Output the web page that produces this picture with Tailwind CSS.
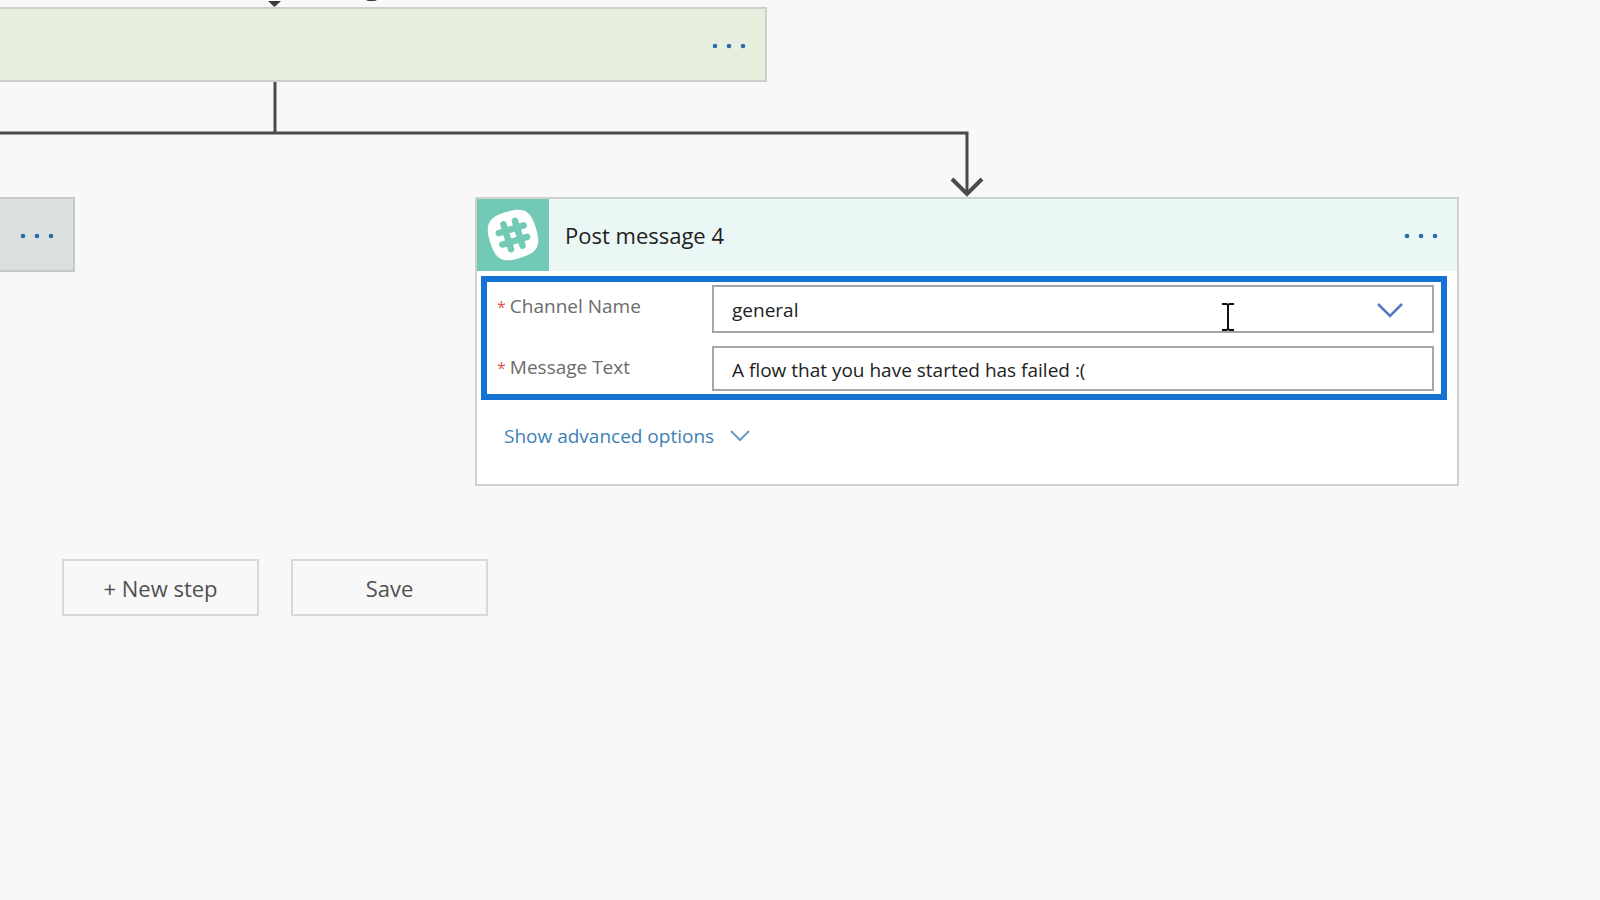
<!DOCTYPE html>
<html lang="en">
<head>
    <meta charset="UTF-8">
    <meta name="viewport" content="width=device-width, initial-scale=1.0">
    <title>Flow designer</title>
    <script src="https://cdn.jsdelivr.net/npm/@tailwindcss/browser@4"></script>
</head>
<body class="min-h-screen overflow-x-hidden bg-[#f8f8f8] font-['Open_Sans','Noto_Sans',sans-serif] text-[#333]">
    <main>
        <!-- Incoming arrow -->
        <svg class="block h-[7px] w-full" fill="#3c3c3c" aria-hidden="true">
            <path d="M268 1h13l-6.5 6z"/>
            <path d="M366 0h11l-2 1h-7z"/>
        </svg>

        <!-- Parent step -->
        <section class="flex h-[75px] w-[767px] items-center justify-end border-2 border-l-0 border-[#cdd0c8] bg-[#e8eedd] pt-[2px] pr-4">
            <button type="button" aria-label="Step menu" class="flex h-10 w-10 items-center justify-center">
                <svg class="h-2 w-9" viewBox="0 0 36 8" fill="#2a6ca8"><circle cx="4" cy="4" r="2.3"/><circle cx="18" cy="4" r="2.3"/><circle cx="32" cy="4" r="2.3"/></svg>
            </button>
        </section>

        <!-- Branch connector -->
        <svg class="block h-[115px] w-full" fill="none" stroke="#4a4a4a" stroke-width="3" aria-hidden="true">
            <path d="M275 0v51M0 51h967v60"/>
            <path d="M952 97l15 15l15-15" stroke-width="4"/>
        </svg>

        <div class="flex items-start">
            <section class="flex h-[75px] w-[75px] shrink-0 items-center justify-end border-2 border-l-0 border-[#c6c9c9] bg-[#dcdfdf] pt-[2px] pr-4">
                <button type="button" aria-label="Step menu" class="flex h-10 w-10 items-center justify-center">
                    <svg class="h-2 w-9" viewBox="0 0 36 8" fill="#2a6ca8"><circle cx="4" cy="4" r="2.3"/><circle cx="18" cy="4" r="2.3"/><circle cx="32" cy="4" r="2.3"/></svg>
                </button>
            </section>

            <!-- Slack action card -->
            <section class="ml-[400px] w-full max-w-[984px] border-2 border-[#cdd1d0] bg-white pb-8">
                <header class="flex h-[72px] items-center bg-[#eaf7f5] pr-4">
                    <svg class="h-[72px] w-[72px] shrink-0" viewBox="0 0 72 72" aria-hidden="true">
                        <rect width="72" height="72" fill="#72c9b5"/>
                        <g transform="rotate(-17 36 36)">
                            <path d="M36 12C54 12 60 17 60 36S54 60 36 60S12 55 12 36S18 12 36 12Z" fill="#fff"/>
                            <path d="M30 23v26M42 23v26M23 30h26M23 42h26" fill="none" stroke="#72c9b5" stroke-width="6.500" stroke-linecap="round"/>
                        </g>
                    </svg>
                    <h2 class="ml-4 flex-1 text-[22px] leading-8 text-[#222]">Post message 4</h2>
                    <button type="button" aria-label="Step menu" class="flex h-10 w-10 items-center justify-center pt-[2px]">
                        <svg class="h-2 w-9" viewBox="0 0 36 8" fill="#2a6ca8"><circle cx="4" cy="4" r="2.3"/><circle cx="18" cy="4" r="2.3"/><circle cx="32" cy="4" r="2.3"/></svg>
                    </button>
                </header>

                <form class="mt-[5px] mr-[10px] ml-1 grid grid-cols-[214px_1fr] gap-x-[1px] gap-y-[13px] border-[6px] border-[#1473d2] py-[3px] pr-[7px] pl-[10px] text-[19px]">
                    <label for="channel" class="pt-[7px] leading-7 text-[#6b6b6b]"><span class="mr-1 text-[16px] text-[#d9534f]">*</span>Channel Name</label>
                    <div class="relative">
                        <select id="channel" class="h-12 w-full appearance-none border-2 border-[#a6a6a6] bg-white px-[18px] pt-[2px] text-[#222]">
                            <option>general</option>
                        </select>
                        <svg class="pointer-events-none absolute top-[17px] right-[30px] h-4 w-7" viewBox="0 0 28 16" fill="none" stroke="#5478c4" stroke-width="2.5" aria-hidden="true"><path d="M2 2l12 12L26 2"/></svg>
                        <!-- Text cursor -->
                        <svg class="pointer-events-none absolute top-[18px] right-[200px] h-7 w-3" viewBox="0 0 12 28" fill="none" stroke="#111" stroke-width="2" aria-hidden="true"><path d="M0 1h4.5l1.5 1l1.5-1H12M6 2v24M0 27h4.5l1.5-1l1.5 1H12"/></svg>
                    </div>
                    <label for="message" class="pt-[7px] leading-7 text-[#6b6b6b]"><span class="mr-1 text-[16px] text-[#d9534f]">*</span>Message Text</label>
                    <input id="message" type="text" value="A flow that you have started has failed :(" class="h-[45px] w-full border-2 border-[#a6a6a6] bg-white px-[18px] pt-[2px] text-[#222]">
                </form>

                <a href="#" class="mt-5 ml-[27px] inline-flex items-center gap-4 text-[19px] leading-8 text-[#3d7fb5]">
                    Show advanced options
                    <svg class="h-3 w-5" viewBox="0 0 20 12" fill="none" stroke="#6f9bc6" stroke-width="2" aria-hidden="true"><path d="M1 1l9 9l9-9"/></svg>
                </a>
            </section>
        </div>

        <div class="mt-[73px] ml-[62px] flex gap-8 text-[22px]">
            <button type="button" class="h-[57px] w-[197px] border-2 border-[#d8d8d8] pt-[2px] text-[#505050]">+ New step</button>
            <button type="button" class="h-[57px] w-[197px] border-2 border-[#d8d8d8] pt-[2px] text-[#505050]">Save</button>
        </div>
    </main>
</body>
</html>
